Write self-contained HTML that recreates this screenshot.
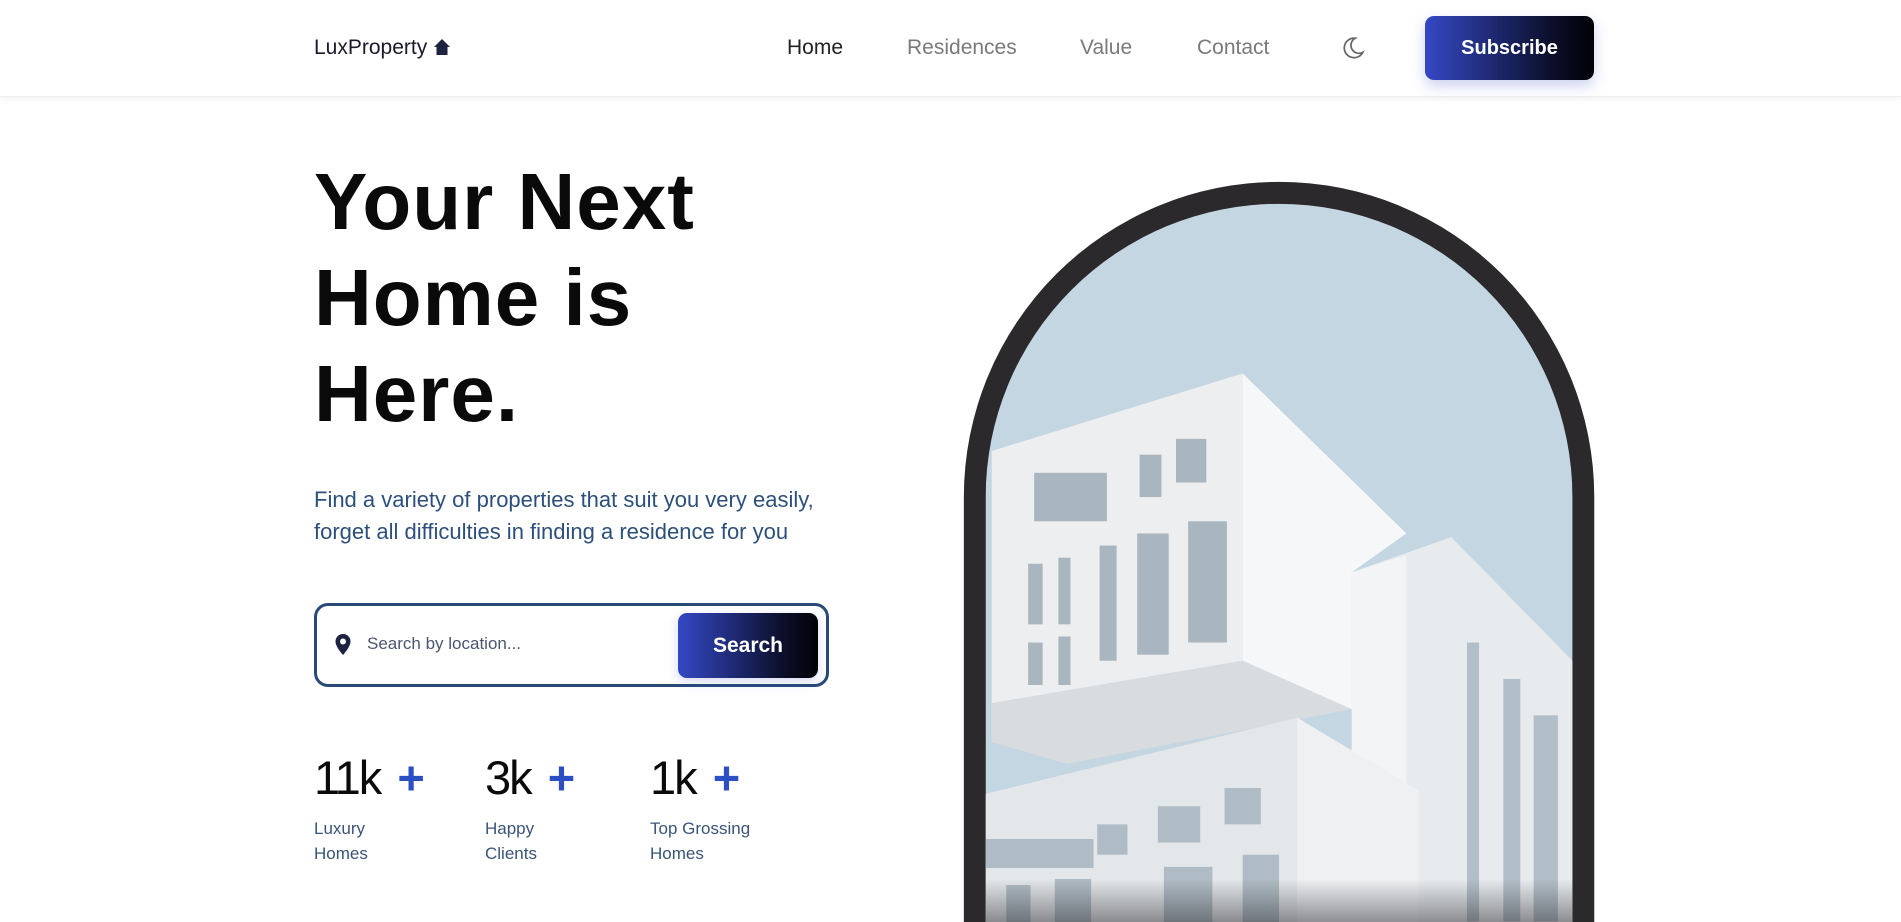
<!DOCTYPE html>
<html><head><meta charset="utf-8">
<style>
*{margin:0;padding:0;box-sizing:border-box}
html,body{width:1901px;height:922px;overflow:hidden}
body{background:#fff;font-family:"Liberation Sans",sans-serif;position:relative}
.nav{position:absolute;left:0;top:0;width:1901px;height:97px;background:#fff;box-shadow:0 2px 6px rgba(0,0,0,.06);border-bottom:1px solid #f0f0f0}
.a{position:absolute;white-space:nowrap}
.link{font-size:21px;color:#7a7a7a;top:36px}
h1{position:absolute;left:314px;top:154px;font-size:80px;line-height:96px;font-weight:bold;color:#0a0a0a;letter-spacing:1px}
.p{left:314px;top:484px;font-size:22px;line-height:32px;color:#2d4f7c}
.box{position:absolute;left:314px;top:603px;width:515px;height:84px;border:3px solid #284a78;border-radius:14px}
.btn{position:absolute;background:linear-gradient(90deg,#3448c5,#0b0f2a 75%,#020206);color:#fff;font-weight:bold;border-radius:9px;display:flex;align-items:center;justify-content:center}
.num{font-size:47px;color:#0a0a0a;top:750px;letter-spacing:-2px}
.num b{color:#2d4fc4;font-weight:bold;margin-left:6px;letter-spacing:0}
.lab{font-size:17px;line-height:25px;color:#3a5478;top:816px}
</style></head><body>
<div class="nav"></div>
<div class="a" style="left:314px;top:36px;font-size:21px;color:#1a1a2a">LuxProperty <svg width="18" height="18" viewBox="0 0 18 18" style="vertical-align:-2px"><path d="M9 1 L17 9 H14.5 V17 H3.5 V9 H1 Z" fill="#1d2340"/></svg></div>
<div class="a link" style="left:787px;color:#222">Home</div>
<div class="a link" style="left:907px">Residences</div>
<div class="a link" style="left:1080px">Value</div>
<div class="a link" style="left:1197px">Contact</div>
<svg class="a" style="left:1340px;top:35px" width="26" height="26" viewBox="0 0 24 24"><path d="M14 3 A9 9 0 1 0 21 16 A7 7 0 0 1 14 3 Z" fill="none" stroke="#666" stroke-width="1.6"/></svg>
<div class="btn" style="left:1425px;top:16px;width:169px;height:64px;font-size:20px;box-shadow:0 6px 14px rgba(52,72,197,.25)">Subscribe</div>

<h1>Your Next<br>Home is<br>Here.</h1>
<div class="a p">Find a variety of properties that suit you very easily,<br>forget all difficulties in finding a residence for you</div>
<div class="box"></div>
<svg class="a" style="left:334px;top:633px" width="18" height="24" viewBox="0 0 18 24"><path d="M9 1 C4.5 1 1.5 4.5 1.5 8.5 C1.5 14 9 22 9 22 C9 22 16.5 14 16.5 8.5 C16.5 4.5 13.5 1 9 1 Z" fill="#1d2340"/><circle cx="9" cy="8.5" r="3" fill="#fff"/></svg>
<div class="a" style="left:367px;top:634px;font-size:17px;color:#4a5670">Search by location...</div>
<div class="btn" style="left:678px;top:613px;width:140px;height:65px;font-size:21px;box-shadow:0 4px 12px rgba(52,72,197,.2)">Search</div>

<div class="a num" style="left:314px">11k <b>+</b></div>
<div class="a num" style="left:485px">3k <b>+</b></div>
<div class="a num" style="left:650px">1k <b>+</b></div>
<div class="a lab" style="left:314px">Luxury<br>Homes</div>
<div class="a lab" style="left:485px">Happy<br>Clients</div>
<div class="a lab" style="left:650px">Top Grossing<br>Homes</div>

<svg class="a" style="left:0;top:0" width="1901" height="922" viewBox="0 0 1568 760.5">
<defs>
<clipPath id="in"><path d="M813 410 A242 242 0 0 1 1297 410 V761 H813 Z"/></clipPath>
<linearGradient id="fade" x1="0" y1="0" x2="0" y2="1"><stop offset="0" stop-color="#2a2a2e" stop-opacity="0"/><stop offset="1" stop-color="#2a2a2e" stop-opacity=".55"/></linearGradient>
</defs>
<path d="M795 410 A260 260 0 0 1 1315 410 V761 H795 Z" fill="#2b292c"/>
<g clip-path="url(#in)">
<rect x="800" y="150" width="510" height="620" fill="#c3d6e2"/>
<polygon points="1115,472 1197,443 1297,545 1297,770 1115,770" fill="#e8ebee"/>
<polygon points="1115,472 1160,458 1160,770 1115,770" fill="#f3f4f5"/>
<g fill="#b3bfc8"><rect x="1210" y="530" width="10" height="230"/><rect x="1240" y="560" width="14" height="200"/><rect x="1265" y="590" width="20" height="170"/></g>
<polygon points="818,372 1025,308 1025,545 818,580" fill="#eceef0"/>
<polygon points="1025,308 1160,440 1115,472 1115,585 1025,545" fill="#f6f7f8"/>
<polygon points="818,580 1025,545 1115,585 880,630 818,612" fill="#d8dcdf"/>
<g fill="#aab6bf">
<rect x="853" y="390" width="60" height="40"/><rect x="940" y="375" width="18" height="35"/><rect x="970" y="362" width="25" height="36"/>
<rect x="848" y="465" width="12" height="50"/><rect x="873" y="460" width="10" height="55"/><rect x="907" y="450" width="14" height="95"/><rect x="938" y="440" width="26" height="100"/><rect x="980" y="430" width="32" height="100"/>
<rect x="848" y="530" width="12" height="35"/><rect x="873" y="525" width="10" height="40"/>
</g>
<polygon points="812,655 1070,592 1170,652 1170,770 812,770" fill="#e4e7ea"/>
<polygon points="1070,592 1170,652 1170,770 1070,770" fill="#eef0f2"/>
<g fill="#b0bcc5">
<rect x="812" y="692" width="90" height="24"/><rect x="905" y="680" width="25" height="25"/><rect x="955" y="665" width="35" height="30"/><rect x="1010" y="650" width="30" height="30"/>
<rect x="830" y="730" width="20" height="40"/><rect x="870" y="725" width="30" height="45"/><rect x="960" y="715" width="40" height="55"/><rect x="1025" y="705" width="30" height="65"/>
</g>
<rect x="800" y="725" width="510" height="40" fill="url(#fade)"/>
</g>
</svg>
</body></html>
